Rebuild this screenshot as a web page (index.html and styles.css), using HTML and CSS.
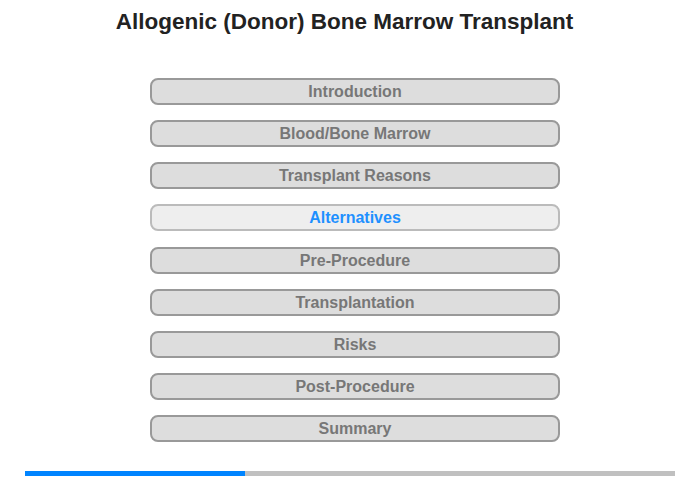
FILE: index.html
```html
<!DOCTYPE html>
<html>
<head>
<meta charset="utf-8">
<link rel="stylesheet" href="styles.css">
</head>
<body>
<div class="page">
  <h1 class="title">Allogenic (Donor) Bone Marrow Transplant</h1>
  <nav class="menu">
    <div class="item">Introduction</div>
    <div class="item">Blood/Bone Marrow</div>
    <div class="item">Transplant Reasons</div>
    <div class="item active">Alternatives</div>
    <div class="item">Pre-Procedure</div>
    <div class="item">Transplantation</div>
    <div class="item">Risks</div>
    <div class="item">Post-Procedure</div>
    <div class="item">Summary</div>
  </nav>
  <div class="progress"><div class="fill" style="width:220px"></div></div>
</div>
</body>
</html>
```
FILE: styles.css
```css
html, body {
  margin: 0;
  padding: 0;
  background: #fff;
}
.page {
  width: 700px;
  height: 480px;
  font-family: "Liberation Sans", Arial, sans-serif;
  display: flex;
  flex-direction: column;
}
.title {
  margin: 9px 0 0 0;
  padding-right: 11px;
  text-align: center;
  font-size: 22.5px;
  line-height: 26px;
  font-weight: bold;
  color: #222;
}
.menu {
  margin: 43px 0 0 150px;
  width: 410px;
  display: flex;
  flex-direction: column;
  gap: 15.125px;
}
.item {
  box-sizing: border-box;
  height: 27px;
  border: 2px solid #999;
  border-radius: 8px;
  background: #ddd;
  color: #777;
  font-size: 16px;
  font-weight: bold;
  line-height: 23px;
  text-align: center;
}
.item.active {
  background: #eee;
  border-color: #bbb;
  color: #1e90ff;
}
.progress {
  margin: 29px 0 0 25px;
  width: 650px;
  height: 5px;
  background: #c0c0c0;
}
.fill {
  height: 100%;
  background: #0084ff;
}
```
